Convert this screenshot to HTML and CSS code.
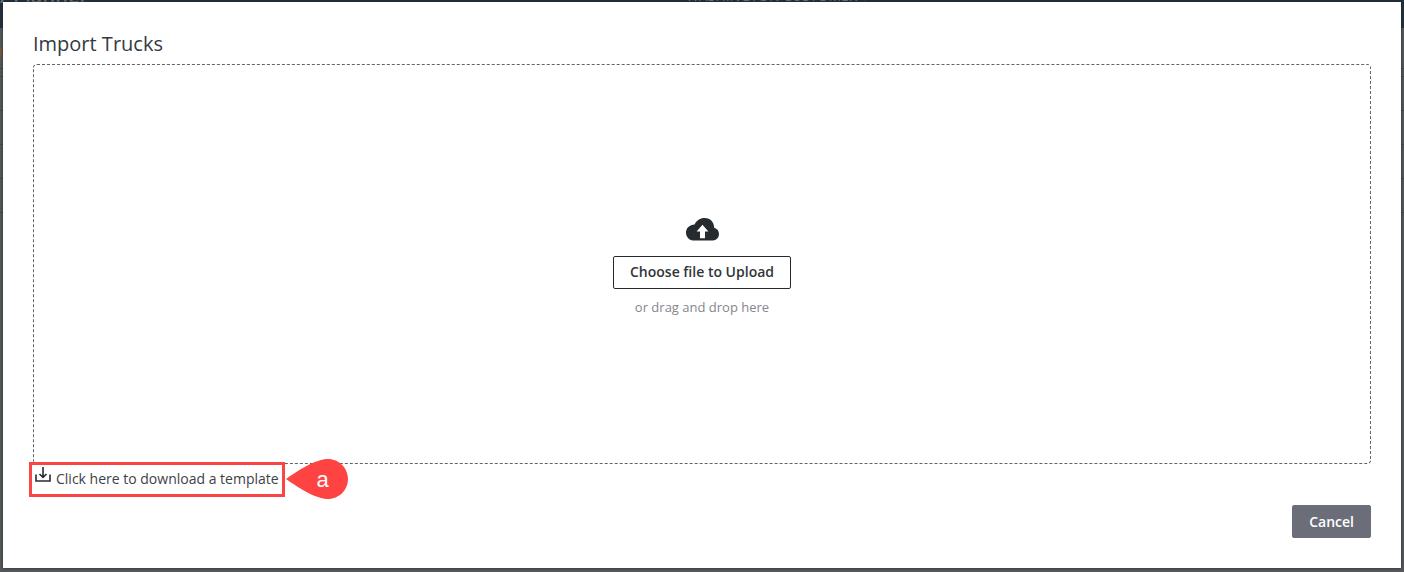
FILE: index.html
```html
<!DOCTYPE html>
<html lang="en">
<head>
<meta charset="utf-8">
<meta name="viewport" content="width=device-width, initial-scale=1">
<title>Import Trucks</title>
<link rel="stylesheet" href="styles.css">
</head>
<body>
<div class="backdrop" aria-hidden="true">
  <div class="app-header">
    <span class="app-name">/ Planner</span>
    <span class="app-account">WASHINGTON CUSTOMER ▾</span>
  </div>
  <div class="app-row app-row-title"><span class="app-marker"></span></div>
  <div class="app-row app-row-head"></div>
  <div class="app-row"></div>
  <div class="app-row"></div>
  <div class="app-row"></div>
  <div class="app-row"></div>
</div>
<main class="dialog" role="dialog" aria-labelledby="dialog-title">
  <h1 class="dialog-title" id="dialog-title">Import Trucks</h1>
  <section class="dropzone">
    <svg class="cloud" viewBox="0 0 33 23" aria-hidden="true">
      <path fill="#262b30" d="M7 22.5C3 22.2 0 18.8 0 14.8C0 10 3.6 6.6 8.6 6.5C10.4 2.5 14.2 0 18.6 0C24.4 0 28 4.1 28.2 9.8C31.2 10.6 33 13.1 33 16.1C33 19.8 30.4 22.5 26.8 22.5Z"/>
      <path fill="#fff" d="M16.5 6.8L22.4 13.4H19V20.2H14V13.4H10.6Z"/>
    </svg>
    <button class="button button-outline" type="button">Choose file to Upload</button>
    <p class="hint">or drag and drop here</p>
  </section>
  <div class="template-row">
    <a class="template-link" href="#">
      <svg class="download" viewBox="0 0 16 16" aria-hidden="true" fill="none" stroke="#262b30">
        <path stroke-width="1.6" d="M1 7.5V14H15V7.5"/>
        <path stroke-width="1.6" d="M8 0V10M4.5 7L8 10.4L11.5 7"/>
      </svg>
      <span>Click here to download a template</span>
    </a>
    <div class="callout">
      <svg class="callout-shape" viewBox="0 0 62 40" aria-hidden="true">
        <path fill="#ff4343" d="M0 20C10 13 22 5 32 2C36 .6 39 0 42 0C53 0 62 9 62 20S53 40 42 40C39 40 36 39.4 32 38C22 35 10 27 0 20Z"/>
      </svg>
      <span class="callout-label">a</span>
    </div>
  </div>
  <footer class="actions">
    <button class="button button-solid" type="button">Cancel</button>
  </footer>
</main>
</body>
</html>
```
FILE: styles.css
```css
* {
  box-sizing: border-box;
}

body {
  margin: 0;
  min-height: 100vh;
  display: flex;
  padding: 2px 3px 4px;
  background: #55595c;
  color: #343a3f;
  font-family: "Open Sans", "Noto Sans", sans-serif;
  font-size: 14px;
  line-height: 20px;
}

.backdrop {
  position: absolute;
  inset: 0;
  overflow: hidden;
}

.app-header {
  display: grid;
  grid-template-columns: 1fr auto 1fr;
  height: 28px;
  background: #1f303e;
  color: #77797a;
}

.app-name {
  margin-top: -14px;
  font-size: 20px;
  font-weight: 600;
}

.app-account {
  margin: -14px 0 0 150px;
}

.app-row {
  height: 34px;
  border-bottom: 1px solid #43484c;
}

.app-row-title {
  height: 41px;
  padding-top: 21px;
}

.app-marker {
  display: block;
  width: 2px;
  height: 8px;
  background: #7a5a34;
}

.app-row-head {
  height: 8px;
}

.dialog {
  position: relative;
  flex: 1;
  display: flex;
  flex-direction: column;
  padding: 30px;
  background: #fff;
  box-shadow: 0 0 3px #25292c;
}

.dialog-title {
  margin: 0 0 8px;
  font-size: 20px;
  font-weight: 400;
  line-height: 24px;
}

.dropzone {
  flex: 1;
  display: flex;
  flex-direction: column;
  align-items: center;
  justify-content: center;
  min-height: 200px;
  padding-top: 6px;
  border: 1px dashed #626568;
  border-radius: 4px;
}

.cloud {
  width: 33px;
  height: 23px;
  margin-bottom: 15px;
}

.button {
  height: 33px;
  padding: 0 16px;
  border: 1px solid #262b30;
  border-radius: 2px;
  font: 600 14px/20px "Open Sans", "Noto Sans", sans-serif;
  cursor: pointer;
}

.button-outline {
  background: #fff;
  color: #30353a;
}

.button-solid {
  border-color: #6b6e79;
  background: #6b6e79;
  color: #fff;
}

.hint {
  margin: 8px 0 0;
  color: #85868e;
  font-size: 13px;
}

.template-row {
  display: flex;
  align-items: center;
  gap: 1px;
  margin: -5px 0 6px -4px;
}

.template-link {
  position: relative;
  display: flex;
  align-items: center;
  gap: 5px;
  height: 35px;
  padding: 0 3px;
  border: 3px solid #f94545;
  background: #fff;
  color: #3c4247;
  text-decoration: none;
}

.download {
  width: 16px;
  height: 16px;
  margin-bottom: 8px;
}

.callout {
  position: relative;
  width: 62px;
  height: 40px;
}

.callout-shape {
  display: block;
  width: 100%;
  height: 100%;
}

.callout-label {
  position: absolute;
  inset: 0 0 0 12px;
  color: #fff;
  font: 22px/42px "Liberation Sans", Arial, sans-serif;
  text-align: center;
}

.actions {
  display: flex;
  justify-content: flex-end;
}
```
